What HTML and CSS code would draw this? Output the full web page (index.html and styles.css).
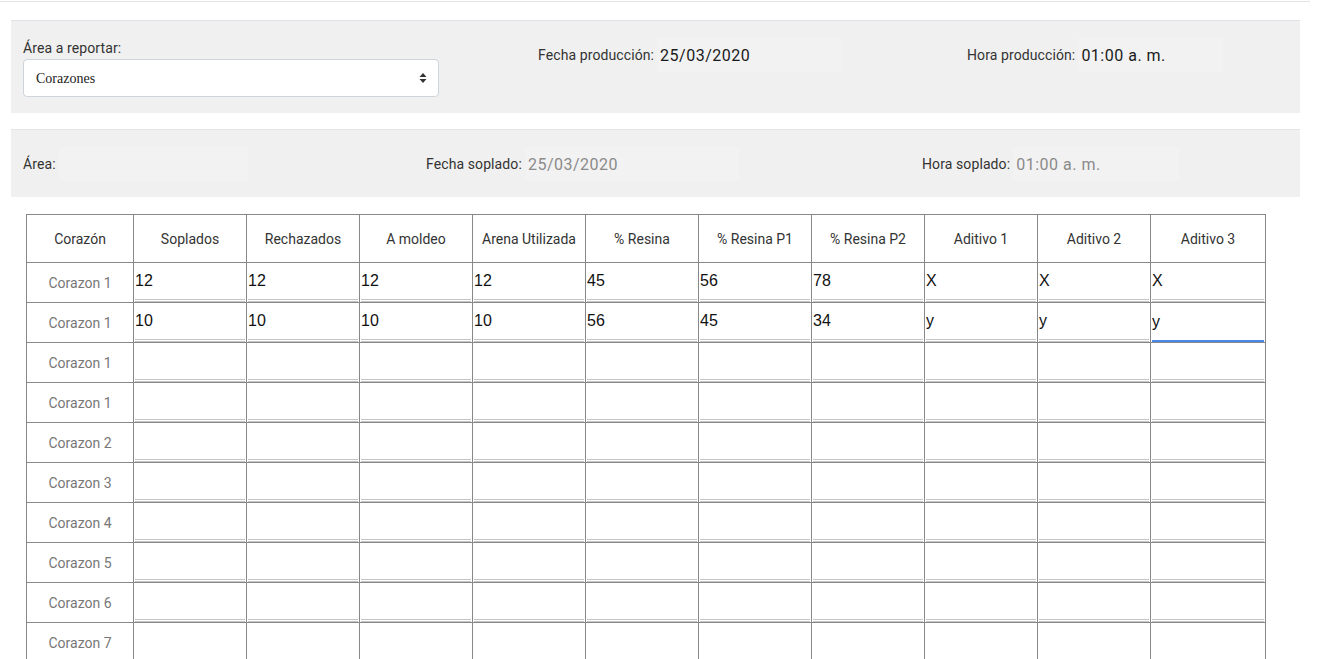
FILE: index.html
```html
<!DOCTYPE html>
<html lang="es">
<head>
  <meta charset="UTF-8" />
  <meta name="viewport" content="width=device-width, initial-scale=1" />
  <title>Reporte de corazones</title>
  <link rel="stylesheet" href="styles.css">
</head>
<body>

  <div class="topbar"></div>

  <div class="contenido">

    <!-- Datos de producción -->
    <section class="panel panel-produccion">
      <div class="campo">
        <label class="etiqueta" for="area">Área a reportar:</label>
        <div class="select-wrap">
          <select id="area" class="select-area">
            <option>Corazones</option>
          </select>
          <svg class="select-flecha" width="8" height="12" viewBox="0 0 8 12">
            <path d="M4 1 L7.5 5 H0.5 Z M4 11 L7.5 7 H0.5 Z" fill="#333"/>
          </svg>
        </div>
      </div>
      <div class="campo-linea">
        <span class="etiqueta">Fecha producción:</span>
        <span class="valor valor-fecha">25/03/2020</span>
      </div>
      <div class="campo-linea">
        <span class="etiqueta">Hora producción:</span>
        <span class="valor valor-hora">01:00 a. m.</span>
      </div>
    </section>

    <!-- Datos de soplado -->
    <section class="panel panel-soplado">
      <div class="campo-linea">
        <span class="etiqueta">Área:</span>
        <span class="valor valor-area"></span>
      </div>
      <div class="campo-linea">
        <span class="etiqueta">Fecha soplado:</span>
        <span class="valor deshabilitado valor-fecha-s">25/03/2020</span>
      </div>
      <div class="campo-linea">
        <span class="etiqueta">Hora soplado:</span>
        <span class="valor deshabilitado valor-hora-s">01:00 a. m.</span>
      </div>
    </section>

    <table class="tabla" id="tabla">
      <colgroup>
        <col class="col-corazon">
        <col span="9" class="col-dato">
        <col class="col-ultima">
      </colgroup>
      <thead>
        <tr>
          <th>Corazón</th>
          <th>Soplados</th>
          <th>Rechazados</th>
          <th>A moldeo</th>
          <th>Arena Utilizada</th>
          <th>% Resina</th>
          <th>% Resina P1</th>
          <th>% Resina P2</th>
          <th>Aditivo 1</th>
          <th>Aditivo 2</th>
          <th>Aditivo 3</th>
        </tr>
      </thead>
      <tbody id="filas"></tbody>
    </table>

  </div>

  <script>
    const filas = [
      { nombre: 'Corazon 1', datos: ['12', '12', '12', '12', '45', '56', '78', 'X', 'X', 'X'] },
      { nombre: 'Corazon 1', datos: ['10', '10', '10', '10', '56', '45', '34', 'y', 'y', 'y'] },
      { nombre: 'Corazon 1', datos: [] },
      { nombre: 'Corazon 1', datos: [] },
      { nombre: 'Corazon 2', datos: [] },
      { nombre: 'Corazon 3', datos: [] },
      { nombre: 'Corazon 4', datos: [] },
      { nombre: 'Corazon 5', datos: [] },
      { nombre: 'Corazon 6', datos: [] },
      { nombre: 'Corazon 7', datos: [] }
    ];

    const tbody = document.getElementById('filas');

    filas.forEach((fila, i) => {
      const tr = document.createElement('tr');
      const nombre = document.createElement('td');
      nombre.className = 'nombre';
      nombre.textContent = fila.nombre;
      tr.appendChild(nombre);

      for (let c = 0; c < 10; c++) {
        const td = document.createElement('td');
        const input = document.createElement('input');
        input.type = 'text';
        input.className = 'celda';
        input.value = fila.datos[c] || '';
        if (i === 1 && c === 9) input.classList.add('activa');
        td.appendChild(input);
        tr.appendChild(td);
      }
      tbody.appendChild(tr);
    });
  </script>

</body>
</html>
```

FILE: styles.css
```css
body {
  margin: 0;
  font-family: Roboto, 'Liberation Sans', sans-serif;
  background-color: #fff;
  color: #333;
}

.topbar {
  height: 1px;
  border-bottom: 1px solid #e2e2e2;
  margin-right: 15px;
}

.contenido {
  padding: 18px 25px 0 11px;
}

/* Paneles grises */
.panel {
  background-color: #f0f0f0;
  display: grid;
  align-items: start;
}

.panel-produccion {
  border-top: 1px solid #dfe2e6;
  grid-template-columns: 515px 429px 1fr;
  padding: 17px 12px 16px 12px;
}

.panel-soplado {
  border-top: 1px solid #e4e4e4;
  grid-template-columns: 403px 496px 1fr;
  padding: 17px 12px 16px 12px;
  margin-top: 16px;
}

.etiqueta {
  font-size: 14px;
  color: #333;
  line-height: 21px;
  letter-spacing: 0.1px;
}

.campo .etiqueta {
  display: block;
}

.select-wrap {
  position: relative;
  width: 416px;
}

.select-area {
  width: 100%;
  height: 38px;
  border: 1px solid #ced4da;
  border-radius: 4px;
  background-color: #fff;
  padding: 0 12px;
  font-family: 'Liberation Serif', serif;
  font-size: 14px;
  color: #222;
  appearance: none;
  -webkit-appearance: none;
}

.select-flecha {
  position: absolute;
  right: 12px;
  top: 13px;
}

.campo-linea {
  display: flex;
  align-items: center;
  height: 34px;
}

.valor {
  display: flex;
  align-items: center;
  height: 34px;
  margin-left: 3px;
  padding-left: 3px;
  background-color: #f2f2f2;
  font-size: 16px;
  color: #1a1a1a;
  letter-spacing: 0.5px;
}

.valor.deshabilitado {
  color: #8a8a8a;
}

.valor-fecha { width: 181px; }
.valor-hora { width: 142px; }
.valor-area { width: 186px; }
.valor-fecha-s { width: 211px; }
.valor-hora-s { width: 163px; }

/* Tabla de captura */
.tabla {
  border-collapse: collapse;
  margin: 17px 0 0 15px;
  table-layout: fixed;
  width: 1239px;
  border: 1px solid #333;
}

.col-corazon { width: 107px; }
.col-dato { width: 113px; }
.col-ultima { width: 115px; }

.tabla th,
.tabla td {
  border: 1px solid #888;
  padding: 0;
}

.tabla th {
  height: 47px;
  font-size: 14px;
  font-weight: normal;
  color: #333;
}

.tabla td {
  height: 39px;
}

.tabla td.nombre {
  text-align: center;
  font-size: 14px;
  color: #777;
}

.celda {
  display: block;
  box-sizing: border-box;
  width: calc(100% - 2px);
  height: 39px;
  margin: 0 1px;
  padding: 0;
  border: none;
  border-bottom: 3px double #c4c4c4;
  background: transparent;
  font-family: 'Liberation Sans', Arial, sans-serif;
  font-size: 16px;
  color: #111;
  outline: none;
}

.celda.activa {
  border-bottom: 2px solid #4a86e8;
}
```
